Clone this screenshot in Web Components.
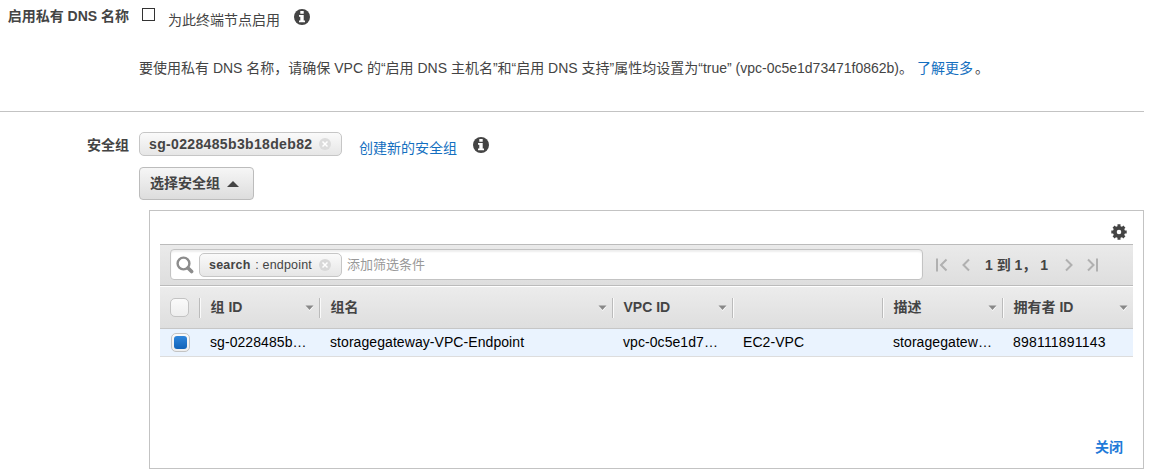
<!DOCTYPE html>
<html lang="zh-CN">
<head>
<meta charset="utf-8">
<title>安全组</title>
<style>
html,body{margin:0;background:#fff}
body{font:14px/20px "Liberation Sans","Noto Sans CJK SC",sans-serif;color:#444;width:1152px;height:475px;overflow:hidden}
</style>
</head>
<body>
<endpoint-form></endpoint-form>
<script>
const define = (name, html) => customElements.define(name, class extends HTMLElement {
  constructor() {
    super();
    const t = document.createElement('template');
    t.innerHTML = html;
    this.attachShadow({mode: 'open'}).appendChild(t.content.cloneNode(true));
  }
});

define('info-icon', `<style>:host{display:block;width:16px;height:16px}svg{display:block}</style>
<svg width="16" height="16" viewBox="0 0 16 16"><circle cx="8" cy="8" r="8" fill="#444"/><path d="M6.300 2h3.400v2.800H6.300zM5 6h4.700v5.400h1.300v1.800H5v-1.800h1.300V7.800H5z" fill="#fff"/></svg>`);

define('token-chip', `<style>
:host{display:flex;align-items:center;box-sizing:border-box;border:1px solid #c6c6c6;border-radius:5px;background:linear-gradient(#fafafa,#e6e6e6);white-space:pre}
svg{display:block;margin-left:auto}</style>
<slot></slot><svg width="12" height="12" viewBox="0 0 12 12"><circle cx="6" cy="6" r="6" fill="var(--x,#dcdcdc)"/><path d="M3.500 3.500l5 5m0-5l-5 5" stroke="#fff" stroke-width="1.500"/></svg>`);

define('drop-button', `<style>
:host{display:flex;align-items:center;box-sizing:border-box;width:115px;height:33px;padding:0 14px 1px 10px;justify-content:space-between;border:1px solid #bcbcbc;border-radius:4px;background:linear-gradient(#f6f6f6,#ddd);font-weight:bold}
svg{display:block;margin-top:2px}</style>
<slot></slot><svg width="12" height="6" viewBox="0 0 12 6"><path d="M0 6L6 0l6 6z" fill="#444"/></svg>`);

define('check-box', `<style>
:host{display:block;box-sizing:border-box;width:19px;height:19px;border:1px solid #c3c3c3;border-radius:5px;background:linear-gradient(#fafafa,#eee);padding:2px}
i{display:none;width:13px;height:13px;border-radius:3px;background:linear-gradient(#2f86dc,#1263b8)}
:host([checked]) i{display:block}</style><i></i>`);

define('pager-nav', `<style>
:host{display:flex;align-items:center;height:14px;font-weight:bold}
svg{display:block;fill:none;stroke:#b0b0b0;stroke-width:2}
span{white-space:pre}
.a{margin-left:14px}.t{margin-left:15px;width:64px}.n{margin-left:16px}.l{margin-left:14px}</style>
<svg width="12" height="14"><path d="M1 .5v13M10.500 1.500L5 7l5.500 5.500"/></svg>
<svg class="a" width="8" height="14"><path d="M7 1.500L1.500 7 7 12.500"/></svg>
<span class="t">1 到 1， 1</span>
<svg class="n" width="8" height="14"><path d="M1 1.500L6.500 7 1 12.500"/></svg>
<svg class="l" width="12" height="14"><path d="M1 1.500L6.500 7 1 12.500M10 .5v13"/></svg>`);

define('search-bar', `<style>
:host{display:flex;box-sizing:border-box;height:42px;padding:4px 0 0 10px;border-top:1px solid #bbb;border-bottom:1px solid #bbb;background:linear-gradient(#eaeaea,#dedede)}
.box{display:flex;align-items:center;box-sizing:border-box;width:753px;height:31px;border:1px solid #c3c3c3;border-radius:4px;background:#fff;box-shadow:inset 0 2px 2px #eee;padding-left:5px;font-size:13px}
.g{display:block;margin-top:1px}
token-chip{width:143px;height:24px;margin-left:5px;padding:0 10px 0 9px;font-size:12.500px;--x:#d8d8d8}
b{letter-spacing:.2px}
.e{letter-spacing:.19px;margin-left:1px}
.p{margin-left:5px;color:#999}
pager-nav{margin:9px 0 0 13px}</style>
<div class="box"><svg class="g" width="18" height="18" viewBox="0 0 18 18" fill="none" stroke="#8c8c8c"><circle cx="7.500" cy="7.500" r="5.900" stroke-width="2.400"/><path d="M12 12l3.600 3.600" stroke-width="3.600" stroke-linecap="round"/></svg>
<token-chip><b>search</b><span class="e"> : endpoint</span></token-chip><span class="p">添加筛选条件</span></div><pager-nav></pager-nav>`);

define('head-cell', `<style>
:host{display:flex;align-items:center;box-sizing:border-box;height:20px;padding:0 5px 0 10.500px;border-left:1px solid #bbb;box-shadow:inset 1px 0 #fafafa;font-weight:bold}
span{margin-top:-2px}
svg{display:block;margin-left:auto;margin-top:1px}
:host([plain]) svg{display:none}</style><span><slot></slot></span><svg width="9" height="6"><path d="M1 1.500h7.500L4.750 6z" fill="#fff"/><path d="M.5 .5h8L4.500 5z" fill="#888"/></svg>`);

define('group-table', `<style>
:host{display:block}
.h,.r{display:grid;grid-template-columns:39px 120px 293px 120px 150px 120px 131px;align-items:center;box-sizing:border-box}
.h{height:43px;border-top:1px solid #fff;border-bottom:1px solid #c6c6c6;background:linear-gradient(#ececec,#dedede)}
.h check-box{margin-left:10px}
.r{height:28px;background:#eaf3fe;border-bottom:1px solid #ddd;color:#000}
.r check-box{margin-left:11px}
.r span{padding-left:11px;margin-top:-2px;white-space:nowrap;letter-spacing:.07px}
.r span:last-child{letter-spacing:.2px}
</style>
<div class="h"><check-box></check-box><head-cell>组 ID</head-cell><head-cell>组名</head-cell><head-cell>VPC ID</head-cell><head-cell plain></head-cell><head-cell>描述</head-cell><head-cell>拥有者 ID</head-cell></div>
<div class="r"><check-box checked></check-box><span>sg-0228485b…</span><span>storagegateway-VPC-Endpoint</span><span>vpc-0c5e1d7…</span><span>EC2-VPC</span><span>storagegatew…</span><span>898111891143</span></div>`);

define('group-panel', `<style>
:host{display:flex;flex-direction:column;box-sizing:border-box;width:995px;height:259px;border:1px solid #c3c3c3;padding:0 10px 11px}
.top{height:33px;display:flex;justify-content:flex-end;padding:13px 6px 0 0;box-sizing:border-box}
.c{margin:auto 10px 0 auto;color:#1f7ad9;font-weight:bold}</style>
<div class="top"><svg width="16" height="16" viewBox="0 0 16 16"><circle cx="8" cy="8" r="4.200" fill="none" stroke="#444" stroke-width="3.800"/><g stroke="#444" stroke-width="3"><path d="M8 .3v3M8 12.700v3M.3 8h3M12.700 8h3M2.600 2.600l2 2M11.400 11.400l2 2M13.400 2.600l-2 2M4.600 11.400l-2 2"/></g></svg></div>
<search-bar></search-bar><group-table></group-table><div class="c">关闭</div>`);

define('endpoint-form', `<style>
:host{display:block;width:1144px}
.row{display:flex;align-items:flex-start}
.lab{width:129px;text-align:right;font-weight:bold;white-space:nowrap;flex:none}
.s1{height:111px;border-bottom:1px solid #c3c3c3;box-sizing:content-box}
.s1 .row{height:58px}
.s1 .lab{margin-top:6px}
.cb{box-sizing:border-box;width:13px;height:13px;border:1px solid #333;margin:8px 0 0 13px}
.en{margin:10px 0 0 13px}
.i1{margin:9px 0 0 14px}
.note{margin-left:139px;white-space:nowrap}
.note .link{margin-right:2px}
.link{color:#146fc0}
.s2{padding-top:20px}
.s2 .lab{margin-top:3px}
.s2 .row{height:35px}
.s2 token-chip{width:203px;height:24px;margin-left:10px;padding:0 10px 0 9px;font-weight:bold;letter-spacing:.35px}
.s2 .link{margin:6px 0 0 17px}
.i2{margin:5px 0 0 16px}
drop-button{margin-left:139px}
group-panel{margin:10px 0 0 149px}
</style>
<div class="s1"><div class="row"><div class="lab">启用私有 DNS 名称</div><div class="cb"></div><div class="en">为此终端节点启用</div><info-icon class="i1"></info-icon></div>
<div class="note">要使用私有 DNS 名称，请确保 VPC 的“启用 DNS 主机名”和“启用 DNS 支持”属性均设置为“true” (vpc-0c5e1d73471f0862b)。 <span class="link">了解更多</span>。</div></div>
<div class="s2"><div class="row"><div class="lab">安全组</div><token-chip>sg-0228485b3b18deb82</token-chip><div class="link">创建新的安全组</div><info-icon class="i2"></info-icon></div>
<drop-button>选择安全组</drop-button><group-panel></group-panel></div>`);
</script>
</body>
</html>
